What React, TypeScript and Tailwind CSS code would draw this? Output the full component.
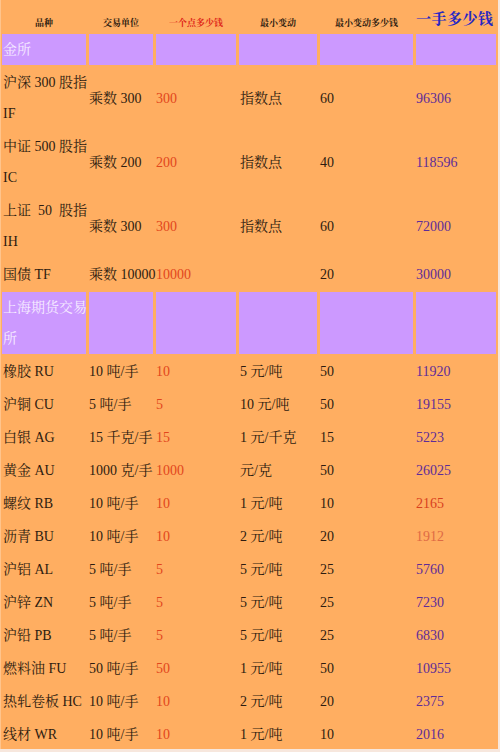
import React from 'react';

type Row = {
  name: string[];
  unit: string;
  point: string;
  tick: string;
  tickValue: string;
  lot: string;
  lotColor?: string;
};

const rows1: Row[] = [
  { name: ['沪深 300 股指', 'IF'], unit: '乘数 300', point: '300', tick: '指数点', tickValue: '60', lot: '96306' },
  { name: ['中证 500 股指', 'IC'], unit: '乘数 200', point: '200', tick: '指数点', tickValue: '40', lot: '118596' },
  { name: ['上证\u00a0 50\u00a0 股指', 'IH'], unit: '乘数 300', point: '300', tick: '指数点', tickValue: '60', lot: '72000' },
  { name: ['国债 TF'], unit: '乘数 10000', point: '10000', tick: '', tickValue: '20', lot: '30000' },
];

const rows2: Row[] = [
  { name: ['橡胶 RU'], unit: '10 吨/手', point: '10', tick: '5 元/吨', tickValue: '50', lot: '11920' },
  { name: ['沪铜 CU'], unit: '5 吨/手', point: '5', tick: '10 元/吨', tickValue: '50', lot: '19155' },
  { name: ['白银 AG'], unit: '15 千克/手', point: '15', tick: '1 元/千克', tickValue: '15', lot: '5223' },
  { name: ['黄金 AU'], unit: '1000 克/手', point: '1000', tick: '元/克', tickValue: '50', lot: '26025' },
  { name: ['螺纹 RB'], unit: '10 吨/手', point: '10', tick: '1 元/吨', tickValue: '10', lot: '2165', lotColor: 'text-[#d8401e]' },
  { name: ['沥青 BU'], unit: '10 吨/手', point: '10', tick: '2 元/吨', tickValue: '20', lot: '1912', lotColor: 'text-[#de6a44]' },
  { name: ['沪铝 AL'], unit: '5 吨/手', point: '5', tick: '5 元/吨', tickValue: '25', lot: '5760' },
  { name: ['沪锌 ZN'], unit: '5 吨/手', point: '5', tick: '5 元/吨', tickValue: '25', lot: '7230' },
  { name: ['沪铅 PB'], unit: '5 吨/手', point: '5', tick: '5 元/吨', tickValue: '25', lot: '6830' },
  { name: ['燃料油 FU'], unit: '50 吨/手', point: '50', tick: '1 元/吨', tickValue: '50', lot: '10955' },
  { name: ['热轧卷板 HC'], unit: '10 吨/手', point: '10', tick: '2 元/吨', tickValue: '20', lot: '2375' },
  { name: ['线材 WR'], unit: '10 吨/手', point: '10', tick: '1 元/吨', tickValue: '10', lot: '2016' },
];

const cell = 'flex items-center whitespace-nowrap leading-[31px]';

const DataRow = ({ row }: { row: Row }) => (
  <>
    <div className={`${cell} pl-px`}>
      <div>
        {row.name.map((line) => (
          <div key={line}>{line}</div>
        ))}
      </div>
    </div>
    <div className={cell}>{row.unit}</div>
    <div className={`${cell} text-[#e2461c]`}>{row.point}</div>
    <div className={`${cell} pl-px`}>{row.tick}</div>
    <div className={cell}>{row.tickValue}</div>
    <div className={`${cell} ${row.lotColor ?? 'text-[#5e2c98]'}`}>{row.lot}</div>
  </>
);

const GroupRow = ({ lines }: { lines: string[] }) => (
  <>
    <div className="bg-[#cc99ff] pl-px leading-[31px] text-[#f6ecff] whitespace-nowrap">
      {lines.map((l) => (
        <div key={l}>{l}</div>
      ))}
    </div>
    <div className="bg-[#cc99ff]" />
    <div className="bg-[#cc99ff]" />
    <div className="bg-[#cc99ff]" />
    <div className="bg-[#cc99ff]" />
    <div className="bg-[#cc99ff]" />
  </>
);

const head = 'flex items-end justify-center h-[32px] pb-[4px] text-[9px] font-bold leading-none';

export default function App() {
  return (
    <div
      className="w-[500px] h-[752px] bg-[#f7e7dd] overflow-hidden"
      style={{ fontFamily: '"Liberation Serif", "Noto Serif CJK SC", "Noto Sans CJK SC", serif' }}
    >
      <div className="w-[498px] h-[749px] bg-[#ffae61] border-l border-[#ffc48c] pl-px text-[14px] text-[#2e1c10]">
        <div className="grid grid-cols-[84px_64px_80px_78px_93px_80px] gap-x-[3px] gap-y-[2px]">
          <div className={head}>品种</div>
          <div className={head}>交易单位</div>
          <div className={`${head} text-[#e0281a]`}>一个点多少钱</div>
          <div className={head}>最小变动</div>
          <div className={head}>最小变动多少钱</div>
          <div className="flex items-end h-[32px] pb-[5px] text-[15px] font-bold leading-none tracking-[0.5px] text-[#2626c4]">
            一手多少钱
          </div>

          <GroupRow lines={['金所']} />
          {rows1.map((r) => (
            <DataRow key={r.name[0]} row={r} />
          ))}
          <GroupRow lines={['上海期货交易', '所']} />
          {rows2.map((r) => (
            <DataRow key={r.name[0]} row={r} />
          ))}
        </div>
      </div>
    </div>
  );
}
